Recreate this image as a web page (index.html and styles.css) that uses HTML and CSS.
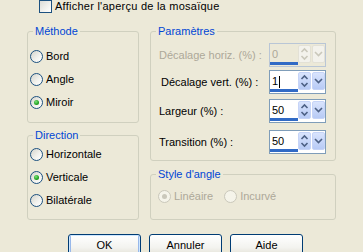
FILE: index.html
```html
<!DOCTYPE html>
<html lang="fr">
<head>
<meta charset="utf-8">
<title>Mosaïque</title>
<link rel="stylesheet" href="styles.css">
</head>
<body>
<div class="dialog">
  <label class="topcheck"><span class="checkbox"></span><span class="toptext">Afficher l'aperçu de la mosaïque</span></label>

  <div class="main">
    <div class="col">
      <fieldset class="group g-methode">
        <legend>Méthode</legend>
        <div class="body radios">
          <div class="radio"><span class="dot"></span><span>Bord</span></div>
          <div class="radio"><span class="dot"></span><span>Angle</span></div>
          <div class="radio"><span class="dot on"></span><span>Miroir</span></div>
        </div>
      </fieldset>
      <fieldset class="group g-direction">
        <legend>Direction</legend>
        <div class="body radios">
          <div class="radio"><span class="dot"></span><span>Horizontale</span></div>
          <div class="radio"><span class="dot on"></span><span>Verticale</span></div>
          <div class="radio"><span class="dot"></span><span>Bilatérale</span></div>
        </div>
      </fieldset>
    </div>
    <div class="col">
      <fieldset class="group g-params">
        <legend>Paramètres</legend>
        <div class="body params">
          <div class="prow disabled">
            <span class="plabel">Décalage horiz. (%) :</span>
            <div class="spin">
              <div class="field"><span class="val">0</span><span class="bar"></span></div>
              <div class="ud"><svg width="11" height="16" viewBox="0 0 11 16"><polyline points="2.5,6 5.5,3 8.5,6" /><polyline points="2.5,10 5.5,13 8.5,10" /></svg></div>
              <div class="dd"><svg width="11" height="16" viewBox="0 0 11 16"><polyline points="2,6 5.5,9.5 9,6" /></svg></div>
            </div>
          </div>
          <div class="prow">
            <span class="plabel shift">Décalage vert. (%) :</span>
            <div class="spin">
              <div class="field"><span class="val">1<span class="caret"></span></span><span class="bar"></span></div>
              <div class="ud"><svg width="11" height="16" viewBox="0 0 11 16"><polyline points="2.5,6 5.5,3 8.5,6" /><polyline points="2.5,10 5.5,13 8.5,10" /></svg></div>
              <div class="dd"><svg width="11" height="16" viewBox="0 0 11 16"><polyline points="2,6 5.5,9.5 9,6" /></svg></div>
            </div>
          </div>
          <div class="prow">
            <span class="plabel">Largeur (%) :</span>
            <div class="spin">
              <div class="field"><span class="val">50</span><span class="bar"></span></div>
              <div class="ud"><svg width="11" height="16" viewBox="0 0 11 16"><polyline points="2.5,6 5.5,3 8.5,6" /><polyline points="2.5,10 5.5,13 8.5,10" /></svg></div>
              <div class="dd"><svg width="11" height="16" viewBox="0 0 11 16"><polyline points="2,6 5.5,9.5 9,6" /></svg></div>
            </div>
          </div>
          <div class="prow">
            <span class="plabel">Transition (%) :</span>
            <div class="spin">
              <div class="field"><span class="val">50</span><span class="bar"></span></div>
              <div class="ud"><svg width="11" height="16" viewBox="0 0 11 16"><polyline points="2.5,6 5.5,3 8.5,6" /><polyline points="2.5,10 5.5,13 8.5,10" /></svg></div>
              <div class="dd"><svg width="11" height="16" viewBox="0 0 11 16"><polyline points="2,6 5.5,9.5 9,6" /></svg></div>
            </div>
          </div>
        </div>
      </fieldset>
      <fieldset class="group g-style">
        <legend>Style d'angle</legend>
        <div class="body hradios">
          <div class="radio disabled"><span class="dot on"></span><span>Linéaire</span></div>
          <div class="radio disabled"><span class="dot"></span><span>Incurvé</span></div>
        </div>
      </fieldset>
    </div>
  </div>

  <div class="buttons">
    <button class="btn default">OK</button>
    <button class="btn">Annuler</button>
    <button class="btn">Aide</button>
  </div>
</div>
</body>
</html>
```

FILE: styles.css
```css
html, body {
  margin: 0;
  padding: 0;
  overflow: hidden;
  background: #ECE9D8;
}
body {
  font-family: "Liberation Sans", Arial, sans-serif;
  font-size: 11px;
  line-height: 13px;
  color: #000;
}
.dialog {
  width: 363px;
  height: 252px;
}
.topcheck {
  display: flex;
  align-items: center;
  gap: 3px;
  height: 13px;
  padding-left: 39px;
}
.toptext {
  letter-spacing: 0.25px;
}
.checkbox {
  width: 11px;
  height: 11px;
  border: 1px solid #1C5180;
  background: linear-gradient(135deg, #DCDCD7 0%, #F6F6F3 70%, #FFFFFF 100%);
  flex: none;
}
.main {
  display: grid;
  grid-template-columns: 112px 186px;
  column-gap: 11px;
  padding-left: 27px;
  margin-top: 12px;
}
.col {
  display: flex;
  flex-direction: column;
}
.group {
  margin: 0;
  padding: 0;
  border: 1px solid #D0D0BF;
  border-radius: 3px;
  min-width: 0;
}
.group legend {
  margin-left: 5px;
  padding: 0 2px;
  line-height: 13px;
  color: #0046D5;
}
.g-methode .body { height: 84px; }
.g-direction { margin-top: 6px; }
.g-direction .body { height: 77px; }
.g-params .body { height: 122px; }
.g-style { margin-top: 7px; }
.g-style .body { height: 38px; }

.radios {
  display: flex;
  flex-direction: column;
  padding-left: 2px;
  box-sizing: border-box;
}
.g-methode .radios { padding-top: 7px; }
.g-direction .radios { padding-top: 1px; }
.radio {
  display: flex;
  align-items: center;
  gap: 3px;
  height: 23px;
}
.dot {
  width: 11px;
  height: 11px;
  border: 1px solid #1C5180;
  border-radius: 50%;
  background: linear-gradient(135deg, #D4D4CC 0%, #F3F3EF 60%, #FFFFFF 100%);
  flex: none;
  position: relative;
}
.dot.on::after {
  content: "";
  position: absolute;
  left: 3px;
  top: 3px;
  width: 5px;
  height: 5px;
  border-radius: 50%;
  background: radial-gradient(circle at 40% 35%, #7BE37A 0%, #21A121 60%, #0E7A0E 100%);
}
.radio.disabled {
  color: #ACA899;
}
.radio.disabled .dot {
  border-color: #CAC8BB;
  background: #F5F4EA;
}
.radio.disabled .dot.on::after {
  background: #CAC8BB;
}
.hradios {
  display: flex;
  gap: 11px;
  padding: 4px 0 0 7px;
  box-sizing: border-box;
}

.params {
  display: flex;
  flex-direction: column;
  padding: 0 9px 0 8px;
  box-sizing: border-box;
}
.prow {
  display: flex;
  align-items: center;
  justify-content: space-between;
  height: 24px;
}
.prow:nth-child(1) { margin-top: 5px; }
.prow:nth-child(2) { margin-top: 3px; }
.prow:nth-child(3) { margin-top: 5px; }
.prow:nth-child(4) { margin-top: 7px; }
.plabel.shift { padding-left: 2px; }
.prow.disabled .plabel { color: #ACA899; }

.spin {
  width: 55px;
  height: 22px;
  border: 1px solid #7F9DB9;
  background: #FFFFFF;
  display: flex;
  align-items: flex-start;
}
.field {
  width: 30px;
  height: 22px;
  display: flex;
  flex-direction: column;
  justify-content: space-between;
}
.val {
  padding: 4px 0 0 2px;
  display: flex;
  align-items: center;
  height: 13px;
}
.caret {
  display: inline-block;
  width: 1px;
  height: 12px;
  background: #000;
  margin-left: 1px;
}
.bar {
  display: block;
  width: 28px;
  height: 3px;
  background: #316AC5;
  margin-bottom: 1px;
}
.ud, .dd {
  height: 16px;
  margin-top: 1px;
  border: 1px solid #C6D4F7;
  border-radius: 2px;
  background: linear-gradient(#D9E4FD, #B7CAF5);
  display: flex;
  align-items: center;
  justify-content: center;
}
.ud { width: 11px; }
.dd { width: 11px; margin-left: 1px; }
.ud svg, .dd svg {
  fill: none;
  stroke: #4D6185;
  stroke-width: 1.6;
  display: block;
}
.prow.disabled .spin {
  border-color: #B9C6D6;
  background: #ECE9D8;
}
.prow.disabled .val { color: #ACA899; }
.prow.disabled .ud, .prow.disabled .dd {
  background: #F3F2EC;
  border-color: #E3E1D6;
}
.prow.disabled svg { stroke: #CAC8BB; }

.buttons {
  display: flex;
  gap: 8px;
  padding-left: 68px;
  margin-top: 14px;
}
.btn {
  width: 73px;
  height: 23px;
  padding: 0;
  font-family: "Liberation Sans", Arial, sans-serif;
  font-size: 11px;
  line-height: 13px;
  color: #000;
  border: 1px solid #003C74;
  border-radius: 3px;
  background: linear-gradient(#FFFFFF 0%, #F3F3EF 60%, #E6E4DA 90%, #D6D0C5 100%);
}
.btn.default {
  box-shadow: inset 0 0 0 1px #CEE7FF, inset 0 -1px 0 2px #98B8EA;
}
```
